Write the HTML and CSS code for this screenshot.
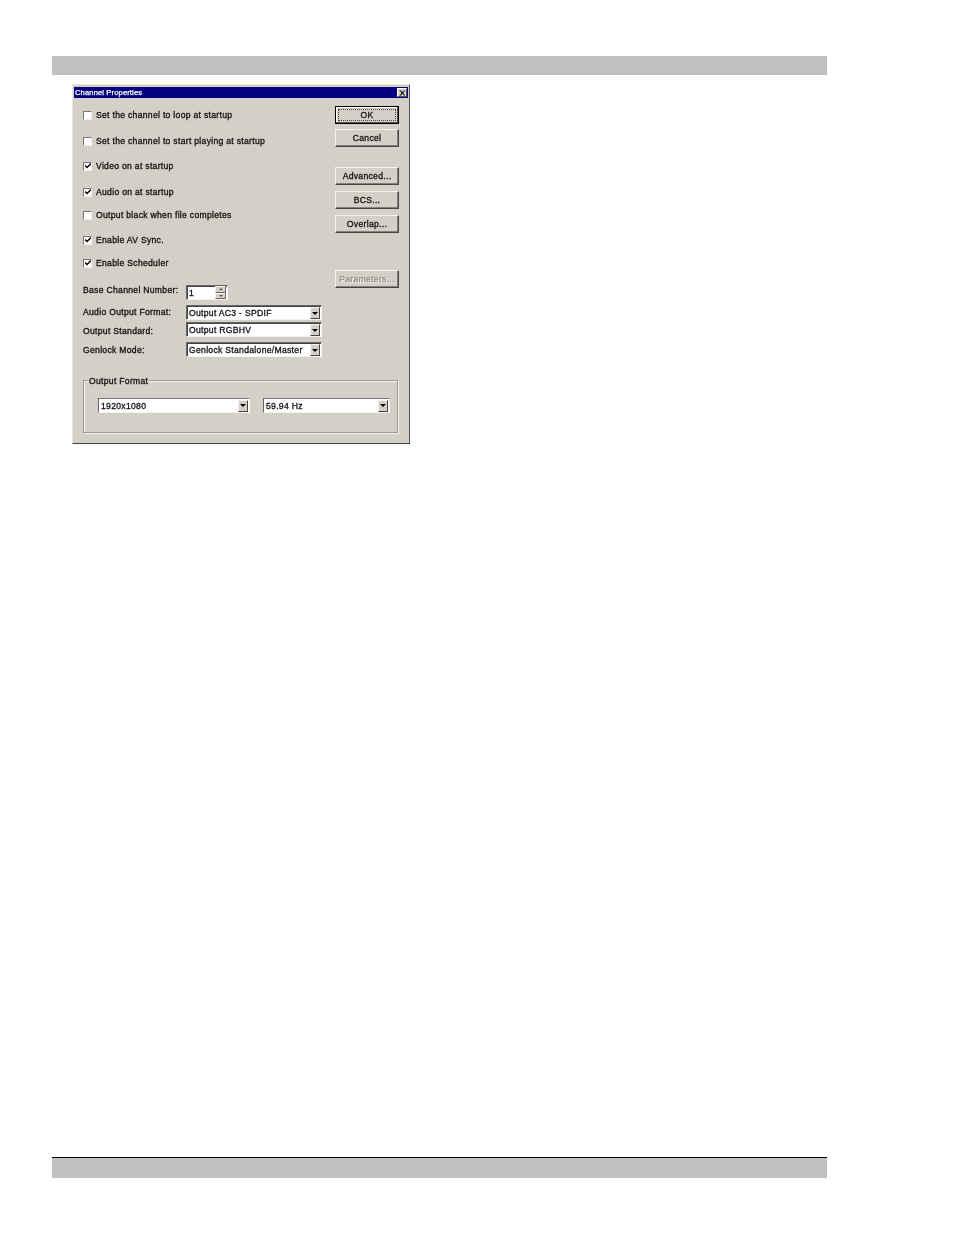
FILE: index.html
```html
<!DOCTYPE html>
<html>
<head>
<meta charset="utf-8" />
<title>Channel Properties</title>
<link rel="stylesheet" href="styles.css">
</head>
<body>
	<div class="bar"></div>

	<div class="window">
		<div class="title">
			<span>Channel Properties</span>
			<a class="close">
				<svg width="8" height="7" viewBox="0 0 8 7"><path d="M1 0L7 7M2 0L8 7M7 0L1 7M8 0L2 7" stroke="#000" stroke-width="1" fill="none"/></svg>
			</a>
		</div>

		<div class="main">
			<div class="left">
				<div class="checks">
					<label class="check"><i class="box"></i>Set the channel to loop at startup</label>
					<label class="check"><i class="box"></i>Set the channel to start playing at startup</label>
					<label class="check"><i class="box"><svg width="6" height="6" viewBox="0 0 6 6"><path d="M0 2.5L2 4.5L6 .5" stroke="#000" stroke-width="1.4" fill="none"/></svg></i>Video on at startup</label>
					<label class="check"><i class="box"><svg width="6" height="6" viewBox="0 0 6 6"><path d="M0 2.5L2 4.5L6 .5" stroke="#000" stroke-width="1.4" fill="none"/></svg></i>Audio on at startup</label>
					<label class="check"><i class="box"></i>Output black when file completes</label>
					<label class="check"><i class="box"><svg width="6" height="6" viewBox="0 0 6 6"><path d="M0 2.5L2 4.5L6 .5" stroke="#000" stroke-width="1.4" fill="none"/></svg></i>Enable AV Sync.</label>
					<label class="check"><i class="box"><svg width="6" height="6" viewBox="0 0 6 6"><path d="M0 2.5L2 4.5L6 .5" stroke="#000" stroke-width="1.4" fill="none"/></svg></i>Enable Scheduler</label>
				</div>
				<div class="fields">
					<div class="field">
						<span class="lab lab_base">Base Channel Number:</span>
						<div class="spin">
							<span class="val">1</span>
							<div class="spin_btns"><b class="up"></b><b class="down"></b></div>
						</div>
					</div>
					<div class="field">
						<span class="lab">Audio Output Format:</span>
						<div class="combo wide"><span class="val">Output AC3 - SPDIF</span><b class="drop"></b></div>
					</div>
					<div class="field">
						<span class="lab lab_std">Output Standard:</span>
						<div class="combo wide"><span class="val">Output RGBHV</span><b class="drop"></b></div>
					</div>
					<div class="field">
						<span class="lab lab_gen">Genlock Mode:</span>
						<div class="combo wide"><span class="val">Genlock Standalone/Master</span><b class="drop"></b></div>
					</div>
				</div>
			</div>

			<div class="right">
				<a class="btn default"><span>OK</span></a>
				<a class="btn m_cancel">Cancel</a>
				<a class="btn m_adv">Advanced...</a>
				<a class="btn m_bcs">BCS...</a>
				<a class="btn m_over">Overlap...</a>
				<a class="btn m_param disabled">Parameters...</a>
			</div>
		</div>

		<div class="group">
			<span class="legend">Output Format</span>
			<div class="combo res"><span class="val">1920x1080</span><b class="drop"></b></div>
			<div class="combo hz"><span class="val">59.94 Hz</span><b class="drop"></b></div>
		</div>
	</div>

	<div class="spacer"></div>
	<div class="bar bottom"></div>
</body>
</html>
```

FILE: styles.css
```css
* { padding:0; margin:0; box-sizing:border-box; }
body { background:#fff; padding:56px 127px 57px 52px; height:1235px; display:flex; flex-direction:column; font-family:"Liberation Sans", Arial, sans-serif; }

.bar { height:19px; background:#c0c0c0; flex:none; }
.bar.bottom { height:21px; border-top:1px solid #000; }
.spacer { flex:1; }

.window { width:338px; height:360px; margin:9px 0 0 20px; padding:2px 1px; background:#d4d0c8; border:1px solid; border-color:#e8e6e0 #555 #444 #e8e6e0; font-size:8.6px; color:#111; letter-spacing:.3px; -webkit-text-stroke:.3px #111; filter:blur(.3px); }

.title { height:11px; background:#000080; color:#fff; display:flex; justify-content:space-between; align-items:center; padding:0 1px; font-size:7.6px; letter-spacing:.12px; -webkit-text-stroke:.25px #fff; }
.close { width:10px; height:9px; background:#d4d0c8; border:1px solid; border-color:#fff #555 #555 #fff; display:flex; align-items:center; justify-content:center; }
.close svg { width:6px; height:6px; }

.main { display:flex; justify-content:space-between; padding:8px 9px 0 9px; height:275px; }
.left { width:238px; }
.checks { display:grid; grid-template-rows:24px 28px 22px 30px 16px 34px 12px; margin-top:-3px; }
.check { display:flex; align-items:center; }
.box { width:9px; height:9px; flex:none; margin-right:4px; background:#fff; border:1px solid; border-color:#777 #eee #eee #777; display:flex; align-items:center; justify-content:center; font-style:normal; }

.fields { display:grid; grid-template-rows:20px 17px 20px 16px; margin-top:16px; }
.field { display:flex; align-items:flex-start; }
.lab { width:103px; flex:none; line-height:15px; }
.lab_base { margin-top:-2px; }
.lab_std { margin-top:2px; }
.lab_gen { margin-top:1px; }
.val { flex:1; padding-left:1px; white-space:nowrap; overflow:hidden; }

.combo, .spin { height:15px; background:#fff; border:1px solid; border-color:#666 #f4f3ef #f4f3ef #666; box-shadow:inset 1px 1px 0 #444; display:flex; align-items:center; padding:1px 1px 0 1px; }
.combo.wide { width:136px; }
.spin { width:42px; padding-top:0; }
.drop { width:10px; height:12px; background:#d4d0c8; border:1px solid; border-color:#f4f3ef #444 #444 #f4f3ef; display:flex; align-items:center; justify-content:center; flex:none; }
.drop:after { content:""; border:3px solid transparent; border-top:3px solid #000; border-bottom:0; }

.spin_btns { width:11px; height:100%; display:flex; flex-direction:column; flex:none; }
.spin_btns b { flex:1; background:#d4d0c8; border:1px solid; border-color:#f4f3ef #666 #666 #f4f3ef; display:flex; align-items:center; justify-content:center; }
.up:after { content:""; border:2px solid transparent; border-bottom:2px solid #555; border-top:0; }
.down:after { content:""; border:2px solid transparent; border-top:2px solid #555; border-bottom:0; }

.right { width:64px; display:flex; flex-direction:column; }
.btn { height:18px; flex:none; background:#d4d0c8; border:1px solid; border-color:#f4f3ef #444 #444 #f4f3ef; box-shadow:inset -1px -1px 0 #808080; display:flex; align-items:center; justify-content:center; }
.default { border:1px solid #000; box-shadow:inset -1px -1px 0 #555, inset 1px 1px 0 #fff; padding:2px; }
.default span { flex:1; height:100%; border:1px dotted #444; text-align:center; line-height:10px; }
.m_cancel { margin-top:5px; }
.m_adv { margin-top:20px; }
.m_bcs { margin-top:6px; }
.m_over { margin-top:6px; }
.m_param { margin-top:37px; }
.disabled { color:#8d8b86; -webkit-text-stroke:.2px #8d8b86; text-shadow:1px 1px 0 #f4f3ef; }

.group { position:relative; margin:7px 0 0 9px; width:315px; height:53px; border:1px solid #999; box-shadow:1px 1px 0 #f4f3ef, inset 1px 1px 0 #f4f3ef; display:flex; align-items:flex-start; padding:17px 0 0 14px; }
.group .combo { padding-top:0; border-color:#777 #f4f3ef #f4f3ef #666; box-shadow:none; }
.legend { position:absolute; left:4px; top:-5px; padding:0 1px; background:#d4d0c8; }
.res { width:152px; }
.hz { width:127px; margin-left:13px; }
```
